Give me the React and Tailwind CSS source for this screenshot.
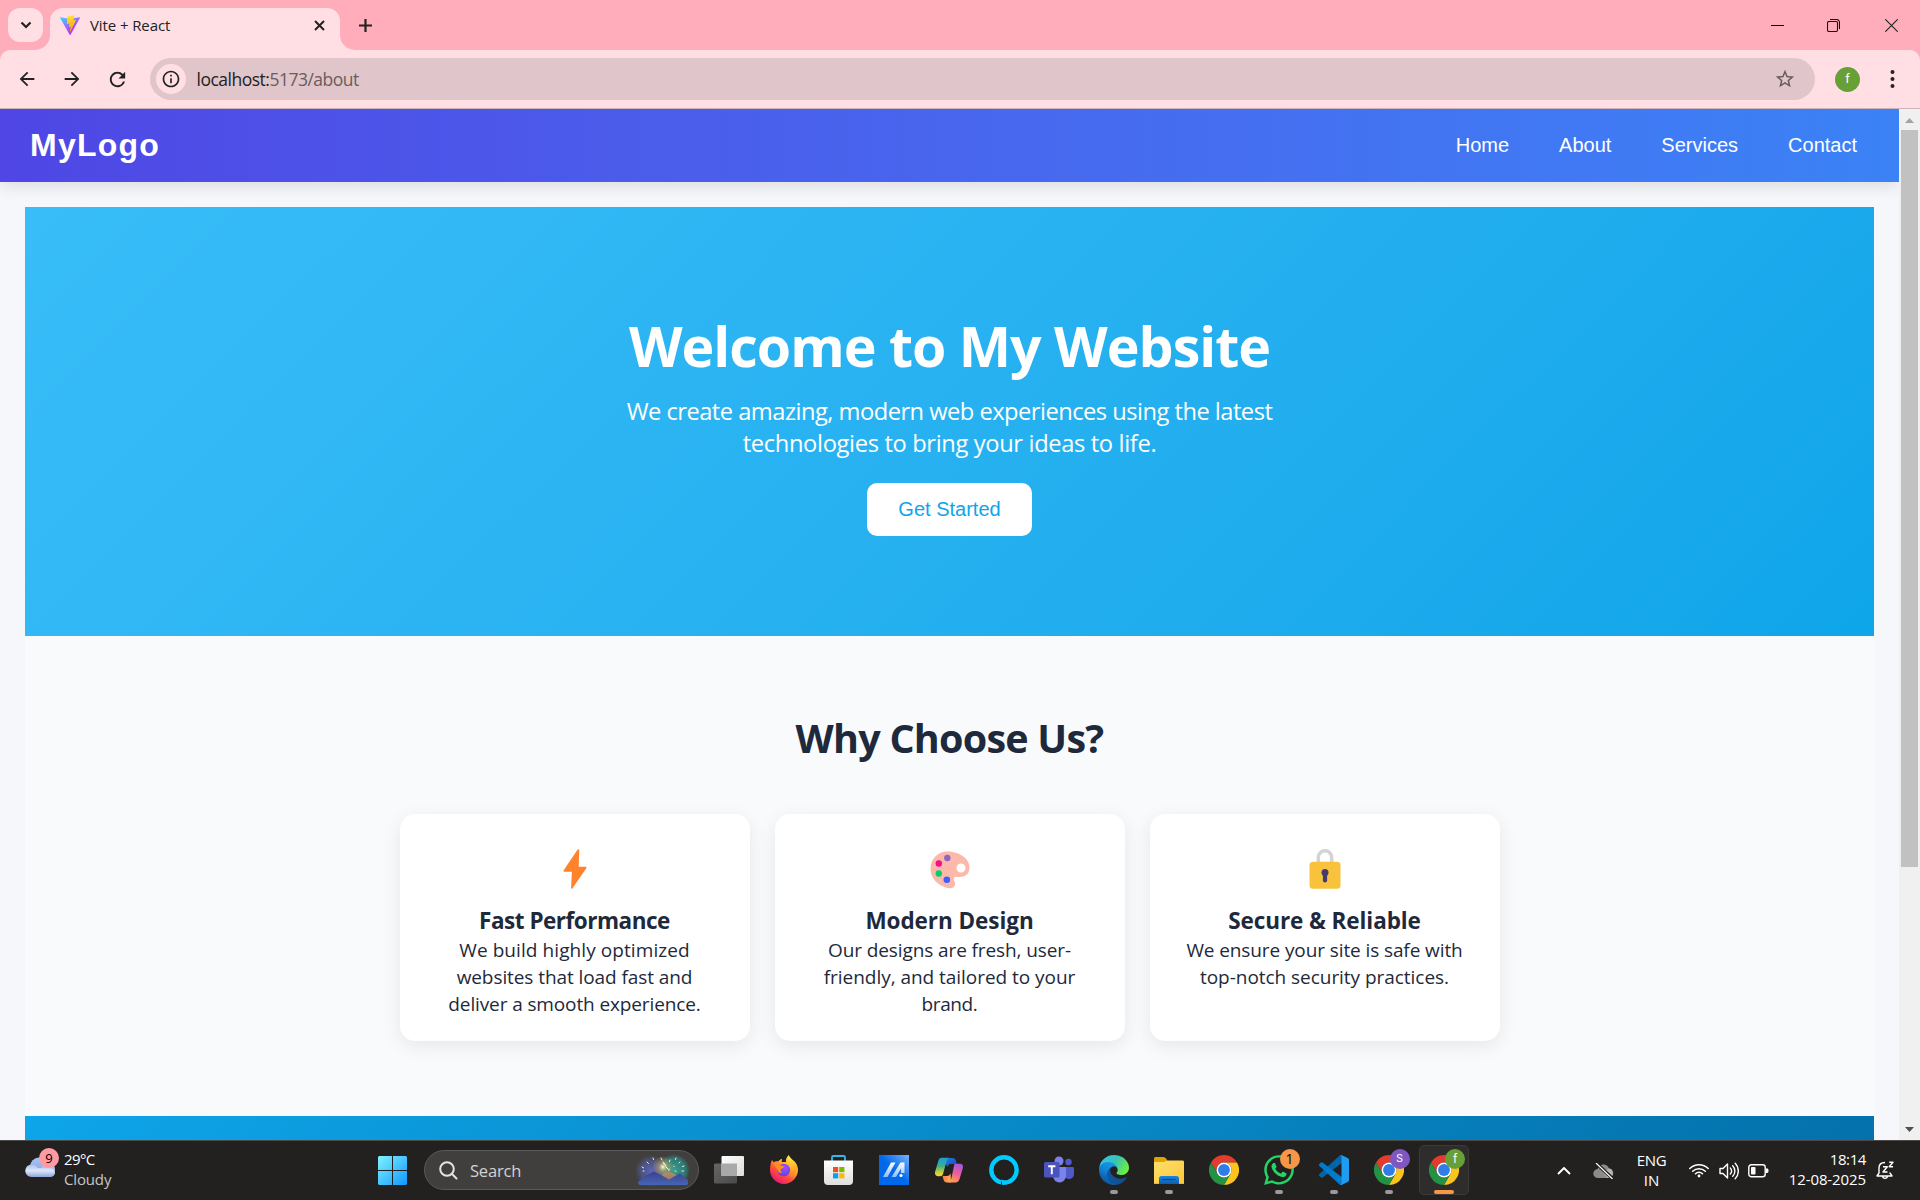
import React from "react";
import { MdArrowBack, MdArrowForward, MdRefresh, MdStarBorder, MdInfoOutline } from "react-icons/md";
import { FaWhatsapp } from "react-icons/fa";

function ViteLogo() {
  return (
    <svg className="h-5 w-5" viewBox="0 0 256 257">
      <defs>
        <linearGradient id="viteA" x1="-.8%" x2="57.6%" y1="7.6%" y2="78.4%"><stop offset="0" stopColor="#41D1FF" /><stop offset="1" stopColor="#BD34FE" /></linearGradient>
        <linearGradient id="viteB" x1="43.4%" x2="50.3%" y1="2.2%" y2="89%"><stop offset="0" stopColor="#FFEA83" /><stop offset=".083" stopColor="#FFDD35" /><stop offset="1" stopColor="#FFA800" /></linearGradient>
      </defs>
      <path fill="url(#viteA)" d="M255.153 37.938L134.897 252.976c-2.483 4.44-8.862 4.466-11.382.048L.875 37.958c-2.746-4.814 1.371-10.646 6.827-9.67l120.385 21.517a6.537 6.537 0 0 0 2.322-.004l117.867-21.483c5.438-.991 9.574 4.796 6.877 9.62Z" />
      <path fill="url(#viteB)" d="M185.432.063L96.44 17.501a3.268 3.268 0 0 0-2.634 3.014l-5.474 92.456a3.268 3.268 0 0 0 3.997 3.378l24.777-5.718c2.318-.535 4.413 1.507 3.936 3.838l-7.361 36.047c-.495 2.426 1.782 4.5 4.151 3.78l15.304-4.649c2.372-.72 4.652 1.36 4.15 3.788l-11.698 56.621c-.732 3.542 3.979 5.473 5.943 2.437l1.313-2.028l72.516-144.72c1.215-2.423-.88-5.186-3.54-4.672l-25.505 4.922c-2.396.462-4.435-1.77-3.759-4.114l16.646-57.705c.677-2.35-1.37-4.583-3.769-4.113Z" />
    </svg>
  );
}

function TabStrip() {
  return (
    <div className="flex h-[50px] bg-[#ffadbb]">
      <div className="ml-2 mt-2 flex h-[34px] w-[35px] items-center justify-center rounded-xl bg-[#ffdfe4]">
        <svg className="h-3 w-3" viewBox="0 0 12 12" fill="none" stroke="#222" strokeWidth="2.2"><path d="M1.500 3.500 6 8l4.500-4.500" /></svg>
      </div>
      <div className="relative ml-[7px] mt-[8px] flex h-[42px] w-[290px] items-center rounded-t-[13px] bg-[#ffdfe4] pb-[8px]">
        <svg className="absolute -left-[15px] bottom-0 h-[15px] w-[15px]" viewBox="0 0 15 15"><path fill="#ffdfe4" d="M15 0A15 15 0 0 1 0 15h15z" /></svg>
        <svg className="absolute -right-[15px] bottom-0 h-[15px] w-[15px]" viewBox="0 0 15 15"><path fill="#ffdfe4" d="M0 0a15 15 0 0 0 15 15H0z" /></svg>
        <span className="ml-[10px]"><ViteLogo /></span>
        <span className="ml-[10px] whitespace-nowrap text-[15px] leading-5 tracking-[-0.1px] text-[#222]">Vite + React</span>
        <svg className="ml-auto mr-[15px] h-[11px] w-[11px]" viewBox="0 0 11 11" stroke="#222" strokeWidth="2"><path d="M1 1l9 9M10 1l-9 9" /></svg>
      </div>
      <svg className="ml-[19px] mt-[18.5px] h-[13px] w-[13px]" viewBox="0 0 13 13" stroke="#222" strokeWidth="2.200"><path d="M6.500 0v13M0 6.500h13" /></svg>
      <div className="ml-auto flex h-[50px] items-center">
        <svg className="mr-[43px] h-[13px] w-[13px]" viewBox="0 0 13 13" stroke="#000"><path d="M0 6.500h13" /></svg>
        <svg className="mr-[45px] h-[13px] w-[13px]" viewBox="0 0 13 13" fill="none" stroke="#111" strokeWidth="1.100"><rect x=".5" y="2.500" width="10" height="10" rx="1.500" /><path d="M3 .5h6.500a3 3 0 0 1 3 3V10" /></svg>
        <svg className="mr-[22px] h-[13px] w-[13px]" viewBox="0 0 13 13" stroke="#222" strokeWidth="1.100"><path d="M.3.3l12.400 12.400M12.700.3L.3 12.700" /></svg>
      </div>
    </div>
  );
}

function Toolbar() {
  return (
    <div className="bg-[#ffadbb]">
      <div className="flex h-[59px] items-center rounded-t-[10px] border-b border-[#cdb4b8] bg-[#ffdfe4]">
        <MdArrowBack className="ml-[16px] text-[22px] text-[#222]" />
        <MdArrowForward className="ml-[23px] text-[22px] text-[#222]" />
        <MdRefresh className="ml-[23px] text-[23px] text-[#222]" />
        <div className="ml-[21px] flex h-[42px] w-[1665px] items-center rounded-full bg-[#e0c5ca]">
          <span className="ml-[6px] flex h-[30px] w-[30px] items-center justify-center rounded-full bg-[#ffdfe4]">
            <MdInfoOutline className="text-[20px] text-[#222]" />
          </span>
          <span className="ml-[10.500px] whitespace-nowrap text-[17.500px] leading-6 tracking-[-0.500px] text-[#6b5b5e]"><span className="text-[#222]">localhost:</span>5173/about</span>
          <MdStarBorder className="ml-auto mr-[19px] text-[22px] text-[#66595c]" />
        </div>
        <span className="ml-[20px] flex h-[25px] w-[25px] items-center justify-center rounded-full bg-[#67a037] font-['Roboto'] text-[13px] text-white">f</span>
        <svg className="ml-[30px] h-[20px] w-[5px]" viewBox="0 0 5 20" fill="#222"><circle cx="2.500" cy="3" r="2" /><circle cx="2.500" cy="10" r="2" /><circle cx="2.500" cy="17" r="2" /></svg>
      </div>
    </div>
  );
}

function Navbar() {
  return (
    <nav className="relative z-10 flex h-[73px] items-center justify-between bg-linear-to-r from-[#4f46e5] to-[#3b82f6] pb-[2px] pl-[30px] pr-[42px] font-['Liberation_Sans'] text-white shadow-[0_5px_15px_rgba(0,0,0,0.1)]">
      <div className="text-[32px] font-bold leading-10 tracking-[1.250px]">MyLogo</div>
      <div className="flex gap-[50px] text-[20px] leading-6">
        <span>Home</span><span>About</span><span>Services</span><span>Contact</span>
      </div>
    </nav>
  );
}

function Bolt() {
  return <svg className="h-10 w-10" viewBox="0 0 40 40"><path fill="#ff822d" d="M22.500.8c.7-1 1.700-.6 1.700.5L23.700 17.800h6.800c1 0 1.300.7.8 1.500L17.500 39.200c-.7.900-1.500.6-1.400-.5l.8-15.900H9.500c-1 0-1.300-.7-.8-1.500z" /></svg>;
}
function Palette() {
  return (
    <svg className="h-10 w-10" viewBox="0 0 40 40">
      <path fill="#fcb8ab" d="M17.500 2.500C8 2.500.5 10 .5 19.500c0 9.500 7 17 17 19.500 4 1 7.500-.5 7.700-4 .1-2-1.700-3.500-1.500-5.300.2-1.500 1.500-2 3.300-1.800 8 .8 12.500-2.700 12.500-9.400C39.500 9 28.500 2.500 17.500 2.500z" />
      <circle cx="31" cy="19" r="4.500" fill="#fff" />
      <circle cx="17.300" cy="9" r="3.200" fill="#8d65c5" /><circle cx="8.800" cy="14.500" r="3.200" fill="#fb0b8c" /><circle cx="8.800" cy="24.500" r="3.200" fill="#00d26a" /><circle cx="16.800" cy="30.700" r="3.300" fill="#3f5fff" />
    </svg>
  );
}
function Lock() {
  return (
    <svg className="h-10 w-10" viewBox="0 0 40 40">
      <path fill="none" stroke="#d3d3d3" strokeWidth="3.500" d="M13.300 14V8.400a6.700 6.700 0 0 1 13.400 0V14" />
      <rect x="4.500" y="12.800" width="31" height="27" rx="3.500" fill="#f9c23c" />
      <circle cx="20" cy="23.500" r="3.500" fill="#433b6b" /><path stroke="#433b6b" strokeWidth="4.200" strokeLinecap="round" d="M20 24v7.500" />
    </svg>
  );
}

const CARDS = [
  { icon: <Bolt />, title: "Fast Performance", track: "tracking-[-0.480px]", lines: [["We build highly optimized", "tracking-[0.080px]"], ["websites that load fast and", "tracking-[-0.080px]"], ["deliver a smooth experience.", "tracking-[-0.120px]"]] },
  { icon: <Palette />, title: "Modern Design", track: "tracking-[-0.060px]", lines: [["Our designs are fresh, user-", "tracking-[-0.100px]"], ["friendly, and tailored to your", "tracking-[-0.040px]"], ["brand.", "tracking-[-0.400px]"]] },
  { icon: <Lock />, title: "Secure & Reliable", track: "tracking-[-0.080px]", lines: [["We ensure your site is safe with", "tracking-[-0.100px]"], ["top-notch security practices.", "tracking-[-0.040px]"]] },
];

function Card({ icon, title, track, lines }) {
  return (
    <div className="h-[227px] w-[350px] rounded-[15px] bg-white pt-[35px] text-center shadow-[0_5px_19px_rgba(0,0,0,0.08)]">
      <div className="flex h-10 justify-center">{icon}</div>
      <h3 className={"mt-[15px] text-[22.500px] font-bold leading-[33px] " + track}>{title}</h3>
      <p className="text-[19px] leading-[27px]">
        {lines.map(([text, t]) => <span key={text} className={"block " + t}>{text}</span>)}
      </p>
    </div>
  );
}

function Website() {
  return (
    <div className="h-[1031px] w-[1899px] overflow-hidden bg-[#f5f7fb] text-[#1e293b]">
      <Navbar />
      <main className="px-[25px] pt-[25px]">
        <section className="flex h-[429px] flex-col items-center bg-linear-135 from-[#38bdf8] to-[#0ea5e9] pt-[100px] text-white">
          <h1 className="mt-px text-[55.500px] font-bold leading-[76px] tracking-[-1px]">Welcome to My Website</h1>
          <p className="mt-[11px] text-center text-[23.700px] leading-8"><span className="tracking-[-0.520px]">We create amazing, modern web experiences using the latest</span><br /><span className="tracking-[-0.350px]">technologies to bring your ideas to life.</span></p>
          <button className="mt-[24px] h-[53px] w-[165px] rounded-[10px] bg-white pb-[2px] font-['Liberation_Sans'] text-[20px] text-[#0ea5e9]">Get Started</button>
        </section>
        <section className="flex h-[480px] flex-col items-center bg-[#f9fafc] pt-[76px]">
          <h2 className="text-[39.500px] font-bold leading-[53px] tracking-[-0.760px]">Why Choose Us?</h2>
          <div className="mt-[49px] flex gap-[25px]">
            {CARDS.map((c) => <Card key={c.title} {...c} />)}
          </div>
        </section>
        <section className="h-[350px] bg-linear-135 from-[#0ea5e9] to-[#0369a1]" />
      </main>
    </div>
  );
}

function Scrollbar() {
  return (
    <div className="flex w-[21px] flex-col items-center bg-[#f0f0f0]">
      <svg className="mt-[9px] h-[5px] w-[9px]" viewBox="0 0 9 5" fill="#a3a3a3"><path d="M4.500 0 9 5H0z" /></svg>
      <div className="mt-[7px] h-[737px] w-[17px] bg-[#c1c1c1]" />
      <svg className="mb-[8px] mt-auto h-[5px] w-[9px]" viewBox="0 0 9 5" fill="#505050"><path d="M0 0h9L4.500 5z" /></svg>
    </div>
  );
}

function Lin({ id, from, to, mid, x1 = 0, y1 = 0, x2 = 1, y2 = 1 }) {
  return (
    <linearGradient id={id} x1={x1} y1={y1} x2={x2} y2={y2}>
      <stop offset="0" stopColor={from} />{mid && <stop offset=".5" stopColor={mid} />}<stop offset="1" stopColor={to} />
    </linearGradient>
  );
}

function CloudIcon() {
  return (
    <svg className="h-5 w-[30px]" viewBox="0 0 30 20">
      <defs><Lin id="cl1" from="#a9c4f5" to="#7f9fe0" x2={0} /><Lin id="cl2" from="#a8c0ee" mid="#dde7f8" to="#8ea8dc" x2={0} /></defs>
      <circle cx="14" cy="9.500" r="9" fill="url(#cl1)" /><circle cx="23" cy="12" r="7" fill="#a9c1ef" />
      <path fill="url(#cl2)" d="M6.500 7.500c3 0 5 1.500 6 3.500h12a5 5 0 0 1 5.500 4.500c0 2.500-2 4.500-5 4.500H6.500a6.250 6.250 0 0 1 0-12.500z" />
    </svg>
  );
}
function WindowsIcon() {
  return (
    <svg className="h-[29px] w-[29px]" viewBox="0 0 29 29">
      <defs><linearGradient id="win" gradientUnits="userSpaceOnUse" x1="0" y1="0" x2="29" y2="29"><stop offset="0" stopColor="#7ff3ff" /><stop offset="1" stopColor="#0f98ff" /></linearGradient></defs>
      <path fill="url(#win)" d="M1 0h13v14H0V1zM15 0h13l1 1v13H15zM0 15h14v14H1l-1-1zM15 15h14v13l-1 1H15z" />
    </svg>
  );
}
function SearchArt() {
  return (
    <svg className="h-[32px] w-[54px]" viewBox="0 0 54 32">
      <defs>
        <radialGradient id="saA"><stop offset="0" stopColor="#5a64b8" /><stop offset=".6" stopColor="#5563a8" stopOpacity=".6" /><stop offset="1" stopColor="#5563a8" stopOpacity="0" /></radialGradient>
        <radialGradient id="saB"><stop offset="0" stopColor="#3a9d8c" /><stop offset=".7" stopColor="#2c8a84" stopOpacity=".8" /><stop offset="1" stopColor="#2c8a84" stopOpacity="0" /></radialGradient>
        <radialGradient id="saC"><stop offset="0" stopColor="#fff3c8" /><stop offset=".4" stopColor="#d9b56a" stopOpacity=".5" /><stop offset="1" stopColor="#d9b56a" stopOpacity="0" /></radialGradient>
        <Lin id="saM" from="#3f3f92" to="#4366b4" x2={0} />
      </defs>
      <ellipse cx="15" cy="17" rx="16" ry="16" fill="url(#saA)" /><ellipse cx="38" cy="16" rx="16" ry="16" fill="url(#saB)" />
      <ellipse cx="27" cy="13" rx="11" ry="11" fill="url(#saC)" /><ellipse cx="33" cy="24" rx="8" ry="6" fill="#f0845a" opacity=".6" />
      <path fill="url(#saM)" d="M2 28 9 22l9-4.500 7 3.500 8 4.500 6-3.500 5-2.500 8 6.500v4c-.5 1-1.500 1-2.500 1H5c-1.500 0-3-.5-3-3z" />
      <g stroke="#fff" strokeWidth="1" strokeLinecap="round" opacity=".9"><path d="m6 13 1.500 .8M11 8l1.500 1.500M17 4l.5 1.500M7 17h1M25 4l1 2M28 9l2 3M27 8l1 2M34 6l-.5 1.500M40 4l-.5 1.500M44 8l-1 1M48 12l-1.500.5M46 17h1.500M38 12v.5M39 17l1 .3M33 15v1.500M26 12l.5.5M30 13l2 2" /></g>
    </svg>
  );
}
function TaskViewIcon() {
  return (
    <svg className="h-[28px] w-[30px]" viewBox="0 0 30 28">
      <defs><Lin id="tv" from="#ffffff" to="#dcdcdc" /><Lin id="tv2" from="#666" to="#4a4a4a" /></defs>
      <rect x="0" y="7.500" width="23" height="20" rx="1.500" fill="url(#tv2)" /><rect x="7.500" y="0" width="22.500" height="20" rx="1" fill="url(#tv)" /><rect x="7.500" y="7.500" width="15.500" height="12.500" fill="#a9a9a9" />
    </svg>
  );
}
function FirefoxIcon() {
  return (
    <svg className="h-[30px] w-[30px]" viewBox="0 0 30 30">
      <defs>
        <linearGradient id="ffA" x1=".85" y1=".05" x2=".25" y2="1"><stop offset="0" stopColor="#fff44f" /><stop offset=".35" stopColor="#ffb02a" /><stop offset=".65" stopColor="#ff4f3c" /><stop offset="1" stopColor="#e9107a" /></linearGradient>
        <radialGradient id="ffB" cx=".6" cy=".3" r=".8"><stop offset="0" stopColor="#a84bff" /><stop offset="1" stopColor="#5a3fe0" /></radialGradient>
        <Lin id="ffC" from="#fff44f" to="#ff8a1e" x2={0.2} />
      </defs>
      <path fill="url(#ffA)" d="M3 5c.8 1 1.200 1.700 1.500 2.200C6 6.300 8 6.200 9.200 6.500 10.500 4.500 12.500 4 13 4c0 1-.5 2-.2 3H17c-.5-3 1-5.500 3-7 0 3.500 8.500 6 9 14.500C29 22.500 22.500 29 15 29S1 22.500 1 15c0-4 .8-7.500 2-10z" />
      <circle cx="14.800" cy="15" r="6.300" fill="url(#ffB)" />
      <path fill="#ff8f1c" d="M5 9.500c2-1 4-.8 5.200-.2 1.500 1.700 3.500 1.500 4.800 2.200 0 1.500-2.800 2-3.200 3-.7 1.500.4 2.500 1.400 3-1.500 1.500-4.400 0-4.700-3z" />
      <path fill="url(#ffC)" d="M19.500 1c-1 4 2 6 3 8.500 2 4 1.500 9-2 12 6-1 8.500-6 7.300-11.500-1.200-4.500-6.800-5-8.300-9z" opacity=".85" />
    </svg>
  );
}
function StoreIcon() {
  return (
    <svg className="mr-px h-[30px] w-[29px]" viewBox="0 0 29 30">
      <defs><Lin id="st" from="#ffffff" to="#dedede" x2={0} /></defs>
      <path fill="none" stroke="#35b8ea" strokeWidth="1.800" d="M8 6.500V2.200C8 1.500 8.500 1 9.200 1h10.600c.7 0 1.200.5 1.200 1.200v4.300" />
      <path fill="url(#st)" d="M0 5.500h29V26a4 4 0 0 1-4 4H4a4 4 0 0 1-4-4z" />
      <path fill="#f25022" d="M9 12h5.200v5.200H9z" /><path fill="#7fba00" d="M15.200 12h5.200v5.200h-5.200z" /><path fill="#00a4ef" d="M9 18.200h5.200v5.200H9z" /><path fill="#ffb900" d="M15.200 18.200h5.200v5.200h-5.200z" />
    </svg>
  );
}
function AsusIcon() {
  return (
    <svg className="h-[30px] w-[30px]" viewBox="0 0 30 30">
      <defs><Lin id="as" from="#0068ea" mid="#0068ea" to="#78b4ff" x1={0} y1={1} x2={1} y2={0} /><Lin id="as2" from="#fff" to="#8fbcf6" x2={0} /></defs>
      <rect width="30" height="30" fill="url(#as)" />
      <path fill="url(#as2)" d="M12 7.500h4.500L8.500 22H4zM21.500 7.500h4V18H22v-4.500L17 22h-4.500z" /><circle cx="22" cy="20.500" r="1.600" fill="#fff" />
    </svg>
  );
}
function CopilotIcon() {
  return (
    <svg className="h-[26px] w-[30px]" viewBox="0 0 30 26">
      <defs>
        <linearGradient id="cpA" x1=".3" y1="0" x2=".3" y2="1"><stop offset="0" stopColor="#1b9fd9" /><stop offset=".45" stopColor="#3fae86" /><stop offset=".8" stopColor="#c9d03b" /><stop offset="1" stopColor="#ffd02f" /></linearGradient>
        <linearGradient id="cpB" x1=".7" y1="0" x2=".4" y2="1"><stop offset="0" stopColor="#a357e0" /><stop offset=".5" stopColor="#ee5c9c" /><stop offset="1" stopColor="#ff9a52" /></linearGradient>
        <Lin id="cpC" from="#1f8ae8" to="#1a3fbf" /><Lin id="cpD" from="#ff7a4e" to="#ffb155" y2={0} />
      </defs>
      <path fill="url(#cpC)" d="M8 1h10.500c2 0 3 1 3.500 3l.8 3H17c-2 0-3 1-3.500 3z" />
      <path fill="url(#cpA)" d="M7.500.8H15c-1.500.8-2.200 2.500-2.700 4.500L9 17c-.5 1.600-1.500 2.200-3 2.200H4C1.500 19.200.5 17 1.200 14.500L4.300 4C5 2 6 .8 7.500.8z" />
      <path fill="url(#cpD)" d="M8.500 19h4.500c2 0 3-1 3.500-3l.5 9.500h-4c-2 0-3-1-3.500-3z" />
      <path fill="url(#cpB)" d="M20.500 6.800H26c2.500 0 3.500 2 2.800 4.500L25.500 22c-.6 2-1.800 3.500-4 3.500H14.500c1.500-.8 2.300-2 2.800-4z" />
    </svg>
  );
}
function AlexaIcon() {
  return (
    <svg className="h-[30px] w-[30px]" viewBox="0 0 30 30"><circle cx="15" cy="15" r="12.700" fill="none" stroke="#00caff" strokeWidth="4.400" /><path fill="#00caff" d="M12.300 24.500c-.8 2 .4 3.200.7 5.500l4-4z" /><path stroke="#23211f" strokeWidth=".8" d="M12.500 26.500v4" /></svg>
  );
}
function TeamsIcon() {
  return (
    <svg className="h-[28px] w-[30px]" viewBox="0 0 30 28">
      <circle cx="24.500" cy="6" r="3.200" fill="#5059c9" /><path fill="#5059c9" d="M20 11h8.500c.8 0 1.500.7 1.500 1.500V18a5 5 0 0 1-9 3z" />
      <circle cx="15" cy="5" r="4.500" fill="#7b83eb" /><path fill="#7b83eb" d="M9 11h13v9a6.500 6.500 0 0 1-13 0z" />
      <rect x="0" y="6" width="15.500" height="15.500" rx="1.500" fill="#4b53bc" />
      <path fill="none" stroke="#fff" strokeWidth="1.900" d="M4.200 10.200h7.200M7.800 10.200v8" />
    </svg>
  );
}
function EdgeIcon() {
  return (
    <svg className="h-[30px] w-[30px]" viewBox="0 0 256 256">
      <defs><Lin id="edA" from="#0c59a4" to="#114a8b" y2={0} /><Lin id="edB" from="#1b9de2" mid="#1383d8" to="#0d4c8a" x1={0.8} x2={0.3} /><Lin id="edC" from="#35c1f1" mid="#37c2b8" to="#6ff03a" y1={0.2} y2={0.6} /></defs>
      <path fill="url(#edA)" d="M231 190.500c-3.400 1.800-6.900 3.400-10.500 4.700a101.900 101.900 0 0 1-35.900 6.400c-47.300 0-88.500-32.500-88.500-74.300.1-11.400 6.400-21.900 16.400-27.300-42.800 1.800-53.800 46.400-53.800 72.500 0 73.900 68.100 81.400 82.800 81.400 7.900 0 19.800-2.300 27-4.600l1.300-.4a128.300 128.300 0 0 0 66.600-52.800 4 4 0 0 0-5.400-5.600z" />
      <path fill="url(#edB)" d="M105.700 241.400a79.200 79.200 0 0 1-22.700-21.300 80.700 80.700 0 0 1 29.500-120c3.200-1.500 8.500-4.100 15.600-4a32.400 32.400 0 0 1 25.700 13 31.900 31.900 0 0 1 6.300 18.700c0-.2 24.500-79.600-80-79.600-43.900 0-80 41.700-80 78.200-.2 19.300 4 38.500 12.100 56a128 128 0 0 0 156.400 67 75.500 75.500 0 0 1-62.800-8z" />
      <path fill="url(#edC)" d="M152.300 148.900c-.9 1-3.400 2.500-3.400 5.600 0 2.600 1.700 5.200 4.800 7.300 14.300 10 41.400 8.600 41.500 8.600 10.700 0 21.100-2.900 30.300-8.300a61.400 61.400 0 0 0 30.400-52.900c.3-22.400-8-37.300-11.300-43.900C223.500 23.900 177.700 0 128 0A128 128 0 0 0 0 126.200c.5-36.500 36.800-66 80-66 3.500 0 23.500.3 42 10.100 16.300 8.600 24.900 18.900 30.800 29.200 6.200 10.700 7.300 24.100 7.300 29.500 0 5.300-2.700 13.300-7.800 19.900z" />
    </svg>
  );
}
function ExplorerIcon() {
  return (
    <svg className="h-[27px] w-[30px]" viewBox="0 0 30 27">
      <defs><Lin id="ex" from="#ffdf6b" to="#ffc73a" /><Lin id="ex2" from="#1c86dc" to="#0c5fb0" x2={0} /></defs>
      <path fill="#e0a106" d="M0 1.500C0 .7.700 0 1.500 0H9c1 0 1.800.4 2.500 1L13 2.500V9H0z" />
      <path fill="url(#ex)" d="M0 5h9.500c.8 0 1.500-.3 2-.8L12.800 3.500H28.500C29.300 3.500 30 4 30 5v21.500H0z" />
      <path fill="url(#ex2)" d="M5 27v-5.500A2.500 2.500 0 0 1 7.500 19h15a2.500 2.500 0 0 1 2.500 2.500V27z" /><path stroke="#084a91" strokeWidth="1.200" d="M8.500 22.500h13" /><path fill="#f0b429" d="M0 26h5v1H0zM25 26h5v1h-5z" />
    </svg>
  );
}
function ChromeIcon() {
  return (
    <svg className="h-[30px] w-[30px]" viewBox="0 0 48 48">
      <path fill="#e33b2e" d="M3.215 12A24 24 0 0 1 44.785 12H24A12 12 0 0 0 13.608 30Z" />
      <path fill="#fcc31e" d="M44.785 12A24 24 0 0 1 24 48L34.392 30A12 12 0 0 0 24 12Z" />
      <path fill="#229342" d="M24 48A24 24 0 0 1 3.215 12L13.608 30A12 12 0 0 0 34.392 30Z" />
      <circle cx="24" cy="24" r="12" fill="#fff" /><circle cx="24" cy="24" r="9.500" fill="#2f7de9" />
    </svg>
  );
}
function CodeIcon() {
  return (
    <svg className="h-[30px] w-[30px]" viewBox="0 0 100 100">
      <path fill="#0065A9" d="M96.461 10.796L75.857.876A6.230 6.230 0 0 0 68.750 2.083L1.299 63.583a4 4 0 0 0 .004 6.162l5.510 5.009a4.160 4.160 0 0 0 5.321.237L93.361 13.370C96.086 11.303 100 13.246 100 16.667v-.240a6.250 6.250 0 0 0-3.539-5.631z" />
      <path fill="#007ACC" d="M96.461 89.204l-20.604 9.921a6.230 6.230 0 0 1-7.107-1.208L1.299 36.417a4 4 0 0 1 .004-6.162l5.510-5.009a4.160 4.160 0 0 1 5.321-.237L93.361 86.630C96.086 88.697 100 86.754 100 83.333v.240a6.250 6.250 0 0 1-3.539 5.631z" />
      <path fill="#1F9CF0" d="M75.858 99.126a6.230 6.230 0 0 1-7.108-1.209C71.056 100.223 75 98.590 75 95.328V4.672C75 1.410 71.056-.223 68.750 2.083A6.230 6.230 0 0 1 75.858.874l20.601 9.907A6.250 6.250 0 0 1 100 16.413v67.174a6.250 6.250 0 0 1-3.541 5.633z" />
    </svg>
  );
}

function Dock({ children, running, badge, badgeClass }) {
  return (
    <div className="relative flex h-[60px] w-[55px] items-center justify-center">
      {children}
      {badge && <span className={"absolute right-[7px] top-[9px] flex h-5 w-5 items-center justify-center rounded-full " + badgeClass}>{badge}</span>}
      {running && <span className="absolute bottom-[6px] h-1 w-2 rounded-full bg-[#9a9a9a]" />}
    </div>
  );
}

function Tray() {
  return (
    <div className="ml-auto flex h-[59px] items-center text-white">
      <div className="flex w-10 justify-center"><svg className="h-[8px] w-[14px]" viewBox="0 0 14 8" fill="none" stroke="#fff" strokeWidth="1.900"><path d="M1 7l6-6 6 6" /></svg></div>
      <div className="flex w-10 justify-center">
        <svg className="h-[16px] w-[21px]" viewBox="0 0 21 16"><path fill="#8b8b8b" d="M5 15a4.500 4.500 0 0 1-.4-9 6 6 0 0 1 11.300-.8A5 5 0 0 1 16.500 15z" /><path fill="#b5b5b5" d="M10 9l6-3.500a5 5 0 0 1 .5 9.500H14z" /><path stroke="#232120" strokeWidth="3.500" d="M3 0l17 16" /><path stroke="#fff" strokeWidth="1.200" d="M3 0l16.500 16" /></svg>
      </div>
      <div className="flex w-14 flex-col items-center pb-[2px] text-[15px] leading-5"><span className="tracking-[-0.400px]">ENG</span><span>IN</span></div>
      <div className="ml-1 flex w-[30px] justify-center">
        <svg className="h-[15px] w-[20px]" viewBox="0 0 20 15" fill="none" stroke="#fff" strokeWidth="1.500" strokeLinecap="round"><path d="M.8 5.500a13 13 0 0 1 18.400 0M3.700 8.300a9 9 0 0 1 12.600 0M6.500 10.800a5 5 0 0 1 7 0" /><circle cx="10" cy="13" r="1.400" fill="#fff" stroke="none" /></svg>
      </div>
      <div className="flex w-[30px] justify-center">
        <svg className="h-[18px] w-[20px]" viewBox="0 0 20 18" fill="none" stroke="#fff" strokeWidth="1.400" strokeLinecap="round" strokeLinejoin="round"><path d="M1 6.500h3L8.500 2v14L4 11.500H1zM11.300 6a4.500 4.500 0 0 1 0 6M13.700 3.700a7.500 7.500 0 0 1 0 10.600M16.200 1.300a11 11 0 0 1 0 15.400" /></svg>
      </div>
      <div className="flex w-[30px] justify-center">
        <svg className="h-[14px] w-[21px]" viewBox="0 0 21 14"><rect x=".8" y=".8" width="16.400" height="12" rx="2.500" fill="none" stroke="#fff" strokeWidth="1.400" /><rect x="3" y="3" width="4.500" height="7.600" rx=".8" fill="#fff" /><path fill="#fff" d="M18 4.500h1c1 0 1.500.5 1.500 2.300S20 9 19 9h-1z" /></svg>
      </div>
      <div className="flex w-[92.500px] flex-col items-end whitespace-nowrap pb-[3px] text-[15px] leading-5"><span className="tracking-[-0.400px]">18:14</span><span className="tracking-[-0.100px]">12-08-2025</span></div>
      <div className="mr-[17px] flex w-[37px] justify-center">
        <svg className="h-[19px] w-[18px]" viewBox="0 0 18 19" fill="none" stroke="#fff" strokeWidth="1.400" strokeLinejoin="round"><path d="M9 1.500C5 1.500 3 4 3 7v5L1 15h15l-2-3v-.5M6.500 15.500a2.600 2.600 0 0 0 5 0" /><path d="M7 5.700h4.300L7 11h4.500M13.200 1.200H17l-3.800 4.600H17" /></svg>
      </div>
    </div>
  );
}

function Taskbar() {
  return (
    <div className="flex h-[60px] border-t border-[#4b4846] bg-[#232120]">
      <div className="flex h-[59px] w-[365px] shrink-0">
        <div className="relative ml-[25px] mt-[16px] h-[20px] w-[30px]">
          <CloudIcon />
          <span className="absolute -right-[4px] -top-[9.500px] flex h-5 w-5 items-center justify-center rounded-full bg-[#ff99a4] text-[13px] leading-5 text-black">9</span>
        </div>
        <div className="ml-[9px] mt-[8px] flex flex-col whitespace-nowrap text-[15px] leading-5">
          <span className="tracking-[-0.600px] text-white">29°C</span>
          <span className="tracking-[-0.150px] text-[#c5c5c5]">Cloudy</span>
        </div>
      </div>
      <div className="-mt-px flex h-[60px] shrink-0">
        <Dock><span className="pt-px"><WindowsIcon /></span></Dock>
        <div className="ml-1 mr-[2.500px] mt-[10px] flex h-10 w-[275px] items-center rounded-full border border-[#5b5957] bg-[#413f3e]">
          <svg className="ml-[14px] h-[19px] w-[19px]" viewBox="0 0 19 19" fill="none" stroke="#e4e4e4" strokeWidth="2"><circle cx="8" cy="8" r="6.800" /><path strokeLinecap="round" d="m13 13 4.500 4.500" /></svg>
          <span className="ml-[12px] pt-px text-[16.500px] leading-6 tracking-[-0.200px] text-[#d2d1d0]">Search</span>
          <span className="ml-auto mr-[8px] flex"><SearchArt /></span>
        </div>
        <Dock><TaskViewIcon /></Dock>
        <Dock><FirefoxIcon /></Dock>
        <Dock><StoreIcon /></Dock>
        <Dock><AsusIcon /></Dock>
        <Dock><CopilotIcon /></Dock>
        <Dock><AlexaIcon /></Dock>
        <Dock><TeamsIcon /></Dock>
        <Dock running><EdgeIcon /></Dock>
        <Dock running><ExplorerIcon /></Dock>
        <Dock><ChromeIcon /></Dock>
        <Dock running badge="1" badgeClass="bg-[#f79548] text-[14px] leading-5 text-black"><FaWhatsapp className="text-[34px] text-[#25d366]" /></Dock>
        <Dock running><CodeIcon /></Dock>
        <Dock running badge="S" badgeClass="bg-[#7e57c2] text-[11px] leading-5 text-white font-['Roboto']"><ChromeIcon /></Dock>
        <div className="relative my-[5px] ml-[2.500px] flex h-[50px] w-[50px] items-center justify-center rounded-[5px] border border-[#3c3a39] bg-[#2f2d2c]">
          <ChromeIcon />
          <span className="absolute right-[3px] top-[3px] flex h-5 w-5 items-center justify-center rounded-full bg-[#67a037] font-['Roboto'] text-[12px] text-white">f</span>
          <span className="absolute bottom-0 h-1 w-5 rounded-full bg-[#f79548]" />
        </div>
      </div>
      <Tray />
    </div>
  );
}

export default function App() {
  return (
    <div className="h-[1200px] w-[1920px] overflow-hidden bg-white font-['Open_Sans',sans-serif]">
      <TabStrip />
      <Toolbar />
      <div className="flex h-[1031px]"><Website /><Scrollbar /></div>
      <Taskbar />
    </div>
  );
}
